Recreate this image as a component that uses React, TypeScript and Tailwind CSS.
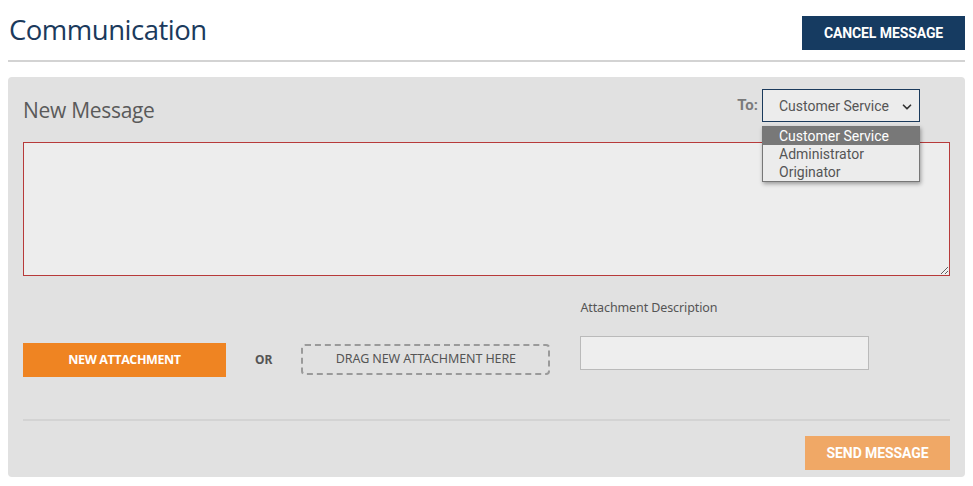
import React from 'react';
import { ChevronDown } from 'lucide-react';

const recipients = ['Customer Service', 'Administrator', 'Originator'];

export default function App() {
  const selected = 'Customer Service';

  return (
    <div className="w-[973px] h-[486px] bg-white overflow-hidden font-['Noto_Sans',sans-serif]">
      {/* header */}
      <div className="mx-2 flex items-start justify-between pt-[11px] pb-[10px] border-b-2 border-[#d3d3d3]">
        <h1 className="pl-px text-[27.5px] leading-[38px] text-[#1b3a5c] font-['Open_Sans',sans-serif] tracking-[-0.5px]">
          Communication
        </h1>
        <button className="mt-[5px] w-[163px] h-[34px] bg-[#163b61] text-white text-[14px] font-bold font-['Roboto',sans-serif] tracking-[-0.1px]">
          CANCEL MESSAGE
        </button>
      </div>

      {/* panel */}
      <div className="mx-2 mt-[15px] h-[400px] rounded-[4px] bg-[#e1e1e1] px-[15px] pt-[12px]">
        <div className="flex items-start justify-between">
          <h2 className="mt-[8px] text-[21px] leading-[26px] text-[#5a5a5a] font-['Open_Sans',sans-serif] tracking-[-0.3px]">
            New Message
          </h2>
          <div className="flex items-center mr-[30px]">
            <span className="mr-[4px] text-[15px] font-bold text-[#7a7a7a] font-['Roboto',sans-serif]">To:</span>
            <div className="relative">
              <div className="w-[158px] h-[33px] border border-[#1b3a5c] bg-[#ececec] flex items-center justify-between pl-[16px] pr-[5px] pt-[2px] text-[14px] text-[#555] font-['Roboto',sans-serif]">
                <span>{selected}</span>
                <ChevronDown size={14} strokeWidth={3} className="text-[#333]" />
              </div>
              <ul className="absolute z-10 left-0 top-[37px] w-[158px] border border-[#777] bg-[#ececec] shadow-[1px_2px_4px_rgba(0,0,0,0.35)] font-['Roboto',sans-serif] text-[14px] leading-[18px]">
                {recipients.map(r => (
                  <li
                    key={r}
                    className={`pl-[16px] ${r === selected ? 'bg-[#787878] text-white' : 'text-[#555]'}`}
                  >
                    {r}
                  </li>
                ))}
              </ul>
            </div>
          </div>
        </div>

        <textarea
          className="mt-[19px] block w-full h-[134px] border border-[#b73a3a] bg-[#ededed] outline-none"
          defaultValue=""
        />

        <div className="mt-[23px] flex items-start">
          <button className="mt-[44px] w-[203px] h-[34px] bg-[#ef8422] text-white text-[12.5px] font-bold font-['Open_Sans',sans-serif] tracking-[-0.4px]">
            NEW ATTACHMENT
          </button>
          <span className="mt-[52px] ml-[29px] text-[12px] font-bold text-[#555]">OR</span>
          <div className="mt-[45px] ml-[29px] w-[249px] h-[31px] border-2 border-dashed border-[#9a9a9a] rounded-[4px] flex items-center justify-center text-[12.5px] text-[#555] tracking-[-0.1px]">
            DRAG NEW ATTACHMENT HERE
          </div>
          <div className="ml-[30px] flex flex-col">
            <label className="text-[12.5px] leading-[18px] text-[#555] tracking-[-0.1px]">Attachment Description</label>
            <input className="mt-[19px] w-[289px] h-[34px] border border-[#bababa] bg-[#eeeeee] outline-none" />
          </div>
        </div>

        <div className="mt-[42px] border-t-2 border-[#d3d3d3]" />

        <div className="mt-[15px] flex justify-end">
          <button className="w-[145px] h-[34px] bg-[#f0a866] text-white text-[14px] font-bold font-['Roboto',sans-serif] tracking-[-0.1px]">
            SEND MESSAGE
          </button>
        </div>
      </div>
    </div>
  );
}
